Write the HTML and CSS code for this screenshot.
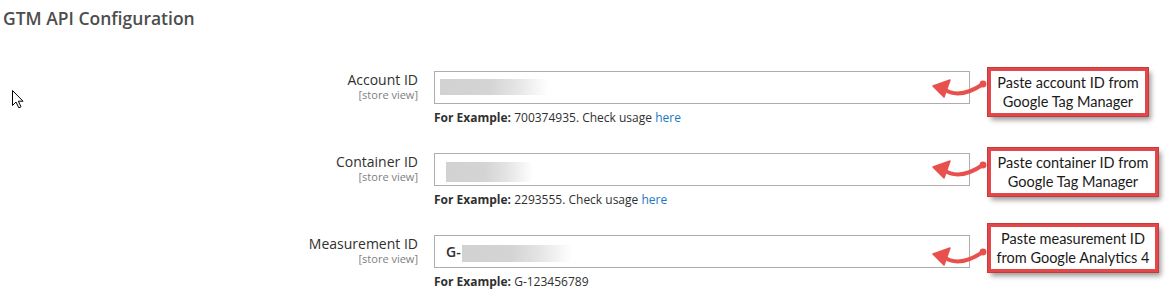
FILE: index.html
```html
<!DOCTYPE html>
<html lang="en">
<head>
<meta charset="utf-8">
<title>GTM API Configuration</title>
<link rel="stylesheet" href="styles.css">
</head>
<body>
<h2 class="section-title">GTM API Configuration</h2>

<svg class="cursor" width="14" height="20" viewBox="0 0 14 20">
  <path d="M1.5 1.5 L1.5 16.5 L5 13 L7.8 18.8 L10 17.8 L7.3 12.2 L12 12.2 Z" fill="#fff" stroke="#000" stroke-width="1" stroke-linejoin="miter"/>
</svg>

<div class="rows">
  <div class="row row--one">
    <div class="label">
      <span class="label-text">Account ID</span>
      <span class="scope">[store view]</span>
    </div>
    <div class="control">
      <div class="field field--top">
        <span class="blur blur--one"></span>
      </div>
      <div class="hint"><b>For Example:</b> 700374935. Check usage <a href="#">here</a></div>
    </div>
    <div class="callout callout--one">Paste account ID from<br>Google Tag Manager</div>
    <svg class="arrow arrow--one" width="62" height="32" viewBox="0 0 62 32">
      <path d="M16 18 Q31 29 55 13" fill="none" stroke="#e8504e" stroke-width="4" stroke-linecap="round"/>
      <circle cx="55" cy="13" r="3.4" fill="#e8504e"/>
      <path d="M5 15 L22 9 L16 26 Z" fill="#e8504e" stroke="#e8504e" stroke-width="1.5" stroke-linejoin="round"/>
    </svg>
  </div>

  <div class="row row--two">
    <div class="label">
      <span class="label-text">Container ID</span>
      <span class="scope">[store view]</span>
    </div>
    <div class="control">
      <div class="field field--top">
        <span class="blur blur--two"></span>
      </div>
      <div class="hint"><b>For Example:</b> 2293555. Check usage <a href="#">here</a></div>
    </div>
    <div class="callout callout--two">Paste container ID from<br>Google Tag Manager</div>
    <svg class="arrow arrow--two" width="62" height="32" viewBox="0 0 62 32">
      <path d="M16 18 Q31 29 55 13" fill="none" stroke="#e8504e" stroke-width="4" stroke-linecap="round"/>
      <circle cx="55" cy="13" r="3.4" fill="#e8504e"/>
      <path d="M5 15 L22 9 L16 26 Z" fill="#e8504e" stroke="#e8504e" stroke-width="1.5" stroke-linejoin="round"/>
    </svg>
  </div>

  <div class="row row--three">
    <div class="label">
      <span class="label-text">Measurement ID</span>
      <span class="scope">[store view]</span>
    </div>
    <div class="control">
      <div class="field field--mid">
        <span class="prefix">G-</span><span class="blur blur--three"></span>
      </div>
      <div class="hint"><b>For Example:</b> G-123456789</div>
    </div>
    <div class="callout callout--three">Paste measurement ID<br>from Google Analytics 4</div>
    <svg class="arrow arrow--three" width="62" height="32" viewBox="0 0 62 32">
      <path d="M16 18 Q31 29 55 13" fill="none" stroke="#e8504e" stroke-width="4" stroke-linecap="round"/>
      <circle cx="55" cy="13" r="3.4" fill="#e8504e"/>
      <path d="M5 15 L22 9 L16 26 Z" fill="#e8504e" stroke="#e8504e" stroke-width="1.5" stroke-linejoin="round"/>
    </svg>
  </div>
</div>
</body>
</html>
```

FILE: styles.css
```css
* { box-sizing: border-box; }

body {
  margin: 0;
  background: #ffffff;
  font-family: "Open Sans", "Liberation Sans", sans-serif;
  color: #303030;
  position: relative;
  width: 1171px;
  height: 291px;
  overflow: hidden;
}

.section-title {
  margin: 8px 0 0 3px;
  font-size: 17.5px;
  line-height: 21px;
  font-weight: 600;
  color: #4d4d4d;
}

.cursor {
  position: absolute;
  left: 11px;
  top: 89px;
}

.rows {
  margin-top: 42px;
  display: flex;
  flex-direction: column;
  gap: 27px;
}

.row {
  position: relative;
  display: grid;
  grid-template-columns: 418px 536px auto;
  column-gap: 16px;
  align-items: start;
}

.label {
  display: flex;
  flex-direction: column;
  align-items: flex-end;
  text-align: right;
}

.label-text {
  font-size: 14px;
  line-height: 18px;
  color: #303030;
}

.scope {
  font-size: 11px;
  line-height: 11px;
  color: #808080;
}

.field {
  height: 33px;
  border: 1px solid #adadad;
  background: #fff;
  display: flex;
}

.field--top {
  align-items: flex-start;
  padding-top: 7px;
}

.field--mid {
  align-items: center;
  padding-left: 11px;
}

.blur {
  display: block;
  background: linear-gradient(90deg, #d2d2d2 0%, #d4d4d4 45%, #e4e4e4 70%, #ffffff 100%);
}

.blur--one {
  margin-left: 5px;
  width: 108px;
  height: 16px;
}

.blur--two {
  margin-left: 11px;
  margin-top: 1px;
  width: 87px;
  height: 20px;
}

.prefix {
  font-size: 14px;
  font-weight: 600;
  color: #303030;
}

.blur--three {
  margin-left: 1px;
  margin-top: 4px;
  width: 110px;
  height: 17px;
}

.hint {
  margin-top: 6px;
  font-size: 12px;
  line-height: 16px;
  color: #303030;
}

.hint b { font-weight: 700; }

.hint a {
  color: #1979c3;
  text-decoration: none;
}

.callout {
  margin-left: 2px;
  border: 3px solid #e2474a;
  outline: 1px solid #c73a3c;
  background: #fff;
  box-shadow: 3px 4px 5px rgba(0, 0, 0, 0.4);
  font-family: Lato, "Liberation Sans", sans-serif;
  font-size: 14.5px;
  line-height: 19px;
  color: #1a1a1a;
  text-align: center;
  padding: 2px 5px 2px;
  white-space: nowrap;
}

.callout--one { margin-top: -3px; width: 160px; }
.callout--two { margin-top: -5px; width: 170px; }
.callout--three { margin-top: -11px; width: 170px; }

.arrow {
  position: absolute;
  left: 928px;
}

.arrow--one { top: 0; }
.arrow--two { top: -1px; }
.arrow--three { top: 4px; }
```
